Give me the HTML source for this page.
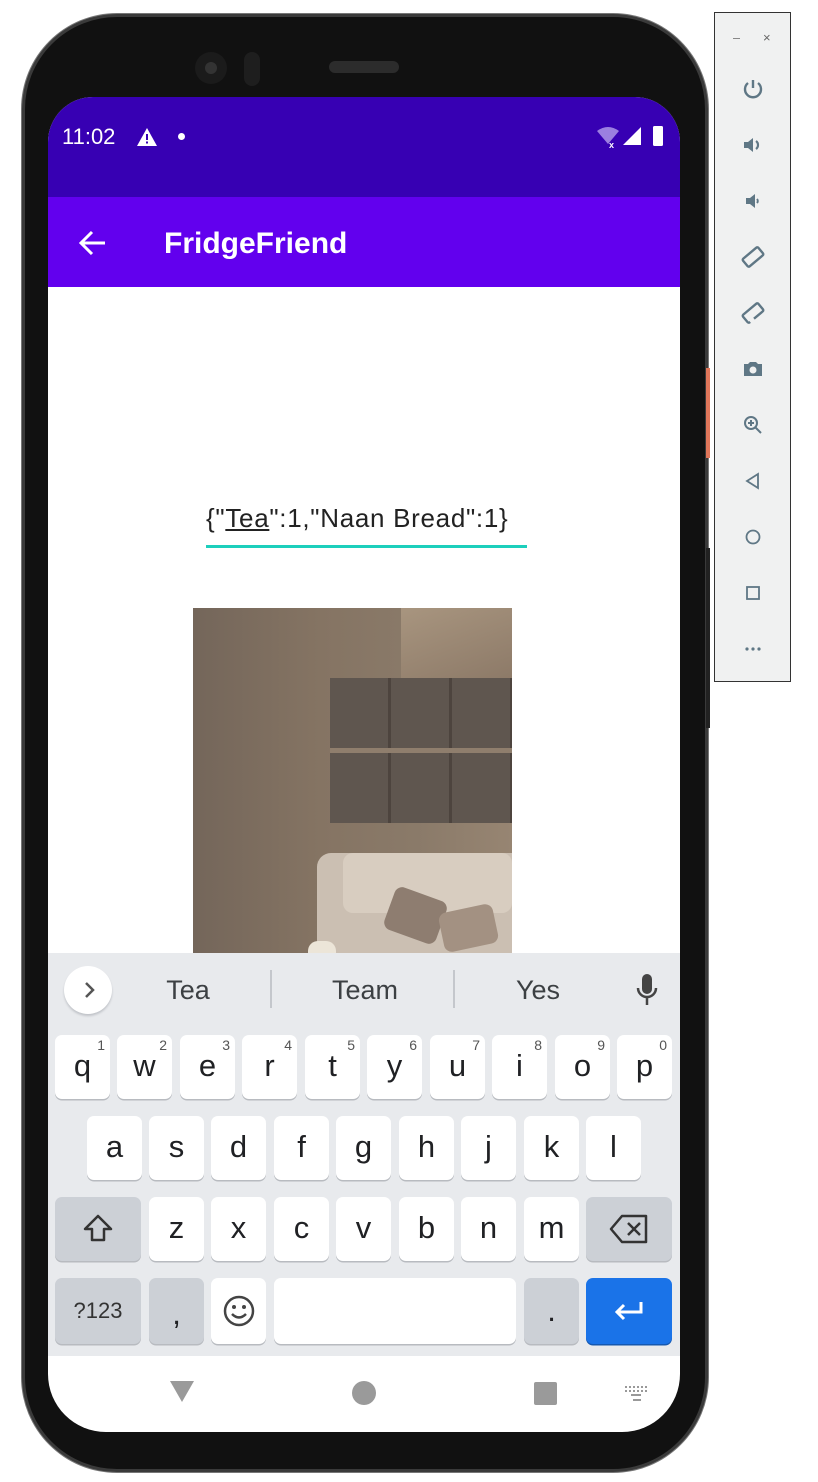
<!DOCTYPE html>
<html><head><meta charset="utf-8"><style>
*{margin:0;padding:0;box-sizing:border-box}
body{width:818px;height:1482px;background:#fff;position:relative;overflow:hidden;font-family:"Liberation Sans",sans-serif}
.abs{position:absolute}
.phone{left:22px;top:14px;width:686px;height:1458px;background:#111;border-radius:95px;border:3px solid #3a3a3a;box-shadow:0 0 0 1px #777}
.screen{left:48px;top:97px;width:632px;height:1335px;background:#fff;border-radius:45px 45px 58px 58px;overflow:hidden}
.key{position:absolute;background:#fff;border-radius:7px;box-shadow:0 1.5px 0 #b8bbc0;text-align:center;font-size:31px;color:#202124;height:64px;line-height:62px}
.key sup{position:absolute;top:3px;right:5px;font-size:14px;line-height:14px;color:#555}
.gray{background:#ccd0d6}
.side{left:714px;top:12px;width:77px;height:670px;background:#f0f1f1;border:1px solid #333}
.ic{position:absolute;left:26px;width:24px;height:24px}
</style></head><body>
<div class="abs phone"></div>
<div class="abs" style="left:706px;top:368px;width:4px;height:90px;background:#e0765a"></div>
<div class="abs" style="left:706px;top:548px;width:4px;height:180px;background:#222"></div>
<div class="abs" style="left:195px;top:52px;width:32px;height:32px;border-radius:50%;background:#1b1b1b"></div>
<div class="abs" style="left:205px;top:62px;width:12px;height:12px;border-radius:50%;background:#333"></div>
<div class="abs" style="left:244px;top:52px;width:16px;height:34px;border-radius:8px;background:#1e1e1e"></div>
<div class="abs" style="left:329px;top:61px;width:70px;height:12px;border-radius:6px;background:#2c2c2c"></div>
<div class="abs screen">
 <div class="abs" style="left:0;top:0;width:632px;height:100px;background:#3700b3"></div>
 <div class="abs" style="left:14px;top:27px;color:#fff;font-size:22px">11:02</div>
 <svg class="abs" style="left:88px;top:30px" width="22" height="20" viewBox="0 0 22 20"><path d="M11 1L21 19H1Z" fill="#fff"/><rect x="10" y="7" width="2" height="6" fill="#3700b3"/><rect x="10" y="14.5" width="2" height="2" fill="#3700b3"/></svg>
 <div class="abs" style="left:130px;top:36px;width:7px;height:7px;border-radius:50%;background:#fff"></div>
 <svg class="abs" style="left:548px;top:28px" width="72" height="24" viewBox="0 0 72 24"><path d="M1 6Q12-2 23 6L12 19Z" fill="#9b7fe0"/><text x="13" y="23" font-size="9" fill="#fff" font-family="Liberation Sans" font-weight="bold">x</text><path d="M45 2V20H27Z" fill="#fff"/><rect x="57" y="1" width="10" height="20" rx="1.5" fill="#fff"/></svg>
 <div class="abs" style="left:0;top:100px;width:632px;height:90px;background:#6200ee"></div>
 <svg class="abs" style="left:30px;top:132px" width="30" height="28" viewBox="0 0 30 28"><path d="M27 14H4M14 3L3 14L14 25" stroke="#fff" stroke-width="3" fill="none"/></svg>
 <div class="abs" style="left:116px;top:130px;color:#fff;font-size:30px;font-weight:bold">FridgeFriend</div>
 <div class="abs" style="left:158px;top:406px;text-align:left;font-size:26px;letter-spacing:0.7px;color:#222;white-space:nowrap">{"<u>Tea</u>":1,"Naan Bread":1}</div>
 <div class="abs" style="left:158px;top:448px;width:321px;height:3px;background:#1dcfbc"></div>
 <div class="abs" style="left:145px;top:511px;width:319px;height:345px;background:linear-gradient(90deg,#74665a,#85746 40%,#8a7a69 70%,#978572);background:linear-gradient(90deg,#74665a,#857463 40%,#8a7a69 70%,#978572);overflow:hidden">
  <div class="abs" style="left:208px;top:0;width:111px;height:70px;background:linear-gradient(160deg,#a8957f,#8d7a68)"></div>
  <div class="abs" style="left:137px;top:70px;width:182px;height:145px;background:repeating-linear-gradient(90deg,#5f564f 0 58px,#4d443e 58px 61px)"></div>
  <div class="abs" style="left:137px;top:140px;width:182px;height:5px;background:#8f7e6d"></div>
  <div class="abs" style="left:124px;top:245px;width:195px;height:100px;background:#cbbfb2;border-radius:14px 0 0 0"></div>
  <div class="abs" style="left:150px;top:245px;width:169px;height:60px;background:#d8cdc0;border-radius:10px"></div>
  <div class="abs" style="left:195px;top:285px;width:55px;height:45px;background:#8e7d70;border-radius:8px;transform:rotate(20deg)"></div>
  <div class="abs" style="left:248px;top:300px;width:55px;height:40px;background:#a39182;border-radius:8px;transform:rotate(-12deg)"></div>
  <div class="abs" style="left:115px;top:333px;width:28px;height:20px;background:#ece5d8;border-radius:10px 10px 0 0"></div>
 </div>
 <div class="abs" style="left:0;top:856px;width:632px;height:403px;background:#e8eaed"></div>
 <div class="abs" style="left:16px;top:869px;width:48px;height:48px;border-radius:50%;background:#fff;box-shadow:0 2px 2px #c0c3c8"></div>
 <svg class="abs" style="left:31px;top:882px" width="20" height="22" viewBox="0 0 20 22"><path d="M7 4L14 11L7 18" stroke="#555" stroke-width="2.5" fill="none"/></svg>
 <div class="abs" style="left:90px;top:878px;width:100px;text-align:center;font-size:27px;color:#3c4043">Tea</div>
 <div class="abs" style="left:222px;top:873px;width:1.5px;height:38px;background:#c4c7cc"></div>
 <div class="abs" style="left:262px;top:878px;width:110px;text-align:center;font-size:27px;color:#3c4043">Team</div>
 <div class="abs" style="left:405px;top:873px;width:1.5px;height:38px;background:#c4c7cc"></div>
 <div class="abs" style="left:440px;top:878px;width:100px;text-align:center;font-size:27px;color:#3c4043">Yes</div>
 <svg class="abs" style="left:587px;top:876px" width="24" height="34" viewBox="0 0 24 34"><rect x="7" y="1" width="10" height="20" rx="5" fill="#444"/><path d="M3 15a9 9 0 0 0 18 0M12 24v8" stroke="#444" stroke-width="2.5" fill="none"/></svg>
 <div class="key" style="left:7px;top:938px;width:55px">q<sup>1</sup></div>
 <div class="key" style="left:69px;top:938px;width:55px">w<sup>2</sup></div>
 <div class="key" style="left:132px;top:938px;width:55px">e<sup>3</sup></div>
 <div class="key" style="left:194px;top:938px;width:55px">r<sup>4</sup></div>
 <div class="key" style="left:257px;top:938px;width:55px">t<sup>5</sup></div>
 <div class="key" style="left:319px;top:938px;width:55px">y<sup>6</sup></div>
 <div class="key" style="left:382px;top:938px;width:55px">u<sup>7</sup></div>
 <div class="key" style="left:444px;top:938px;width:55px">i<sup>8</sup></div>
 <div class="key" style="left:507px;top:938px;width:55px">o<sup>9</sup></div>
 <div class="key" style="left:569px;top:938px;width:55px">p<sup>0</sup></div>
 <div class="key" style="left:39px;top:1019px;width:55px">a</div>
 <div class="key" style="left:101px;top:1019px;width:55px">s</div>
 <div class="key" style="left:163px;top:1019px;width:55px">d</div>
 <div class="key" style="left:226px;top:1019px;width:55px">f</div>
 <div class="key" style="left:288px;top:1019px;width:55px">g</div>
 <div class="key" style="left:351px;top:1019px;width:55px">h</div>
 <div class="key" style="left:413px;top:1019px;width:55px">j</div>
 <div class="key" style="left:476px;top:1019px;width:55px">k</div>
 <div class="key" style="left:538px;top:1019px;width:55px">l</div>
 <div class="key gray" style="left:7px;top:1100px;width:86px"><svg width="34" height="34" viewBox="0 0 34 34" style="margin-top:15px"><path d="M17 4L4 17h7v11h12V17h7Z" stroke="#333" stroke-width="2.5" fill="none" stroke-linejoin="round"/></svg></div>
 <div class="key" style="left:101px;top:1100px;width:55px">z</div>
 <div class="key" style="left:163px;top:1100px;width:55px">x</div>
 <div class="key" style="left:226px;top:1100px;width:55px">c</div>
 <div class="key" style="left:288px;top:1100px;width:55px">v</div>
 <div class="key" style="left:351px;top:1100px;width:55px">b</div>
 <div class="key" style="left:413px;top:1100px;width:55px">n</div>
 <div class="key" style="left:476px;top:1100px;width:55px">m</div>
 <div class="key gray" style="left:538px;top:1100px;width:86px"><svg width="42" height="34" viewBox="0 0 42 34" style="margin-top:15px"><path d="M14 4H38V30H14L3 17Z" stroke="#333" stroke-width="2.5" fill="none" stroke-linejoin="round"/><path d="M20 11l12 12M32 11L20 23" stroke="#333" stroke-width="2.5"/></svg></div>
 <div class="key gray" style="left:7px;top:1181px;width:86px;height:66px;font-size:22px;line-height:66px;color:#333">?123</div>
 <div class="key gray" style="left:101px;top:1181px;width:55px;height:66px;line-height:72px">,</div>
 <div class="key" style="left:163px;top:1181px;width:55px;height:66px"><svg width="34" height="34" viewBox="0 0 34 34" style="margin-top:16px"><circle cx="17" cy="17" r="14" stroke="#444" stroke-width="2.5" fill="none"/><circle cx="12" cy="13" r="2" fill="#444"/><circle cx="22" cy="13" r="2" fill="#444"/><path d="M10 20q7 7 14 0" stroke="#444" stroke-width="2.5" fill="none"/></svg></div>
 <div class="key" style="left:226px;top:1181px;width:242px;height:66px"></div>
 <div class="key gray" style="left:476px;top:1181px;width:55px;height:66px;line-height:66px">.</div>
 <div class="key" style="left:538px;top:1181px;width:86px;height:66px;background:#1a73e8;box-shadow:0 1.5px 0 #1558b0"><svg width="40" height="30" viewBox="0 0 40 30" style="margin-top:18px"><path d="M32 6v10H8M15 9l-7 7 7 7" stroke="#fff" stroke-width="3" fill="none"/></svg></div>
 <svg class="abs" style="left:120px;top:1280px" width="28" height="28" viewBox="0 0 28 28"><path d="M2 4H26L14 25Z" fill="#9a9a9a"/></svg>
 <div class="abs" style="left:304px;top:1284px;width:24px;height:24px;border-radius:50%;background:#9a9a9a"></div>
 <div class="abs" style="left:486px;top:1285px;width:23px;height:23px;border-radius:2px;background:#9a9a9a"></div>
 <svg class="abs" style="left:576px;top:1288px" width="26" height="18" viewBox="0 0 26 18"><g fill="#999"><rect x="1" y="1" width="2" height="2"/><rect x="5" y="1" width="2" height="2"/><rect x="9" y="1" width="2" height="2"/><rect x="13" y="1" width="2" height="2"/><rect x="17" y="1" width="2" height="2"/><rect x="21" y="1" width="2" height="2"/><rect x="1" y="5" width="2" height="2"/><rect x="5" y="5" width="2" height="2"/><rect x="9" y="5" width="2" height="2"/><rect x="13" y="5" width="2" height="2"/><rect x="17" y="5" width="2" height="2"/><rect x="21" y="5" width="2" height="2"/><rect x="7" y="9" width="10" height="2"/><rect x="9" y="14" width="8" height="2"/></g></svg>
</div>
<div class="abs side">
 <div class="abs" style="left:18px;top:25px;width:7px;height:1px;background:#888"></div>
 <div class="abs" style="left:48px;top:17px;font-size:13px;color:#666">×</div>
 <svg class="ic" style="top:64px" viewBox="0 0 24 24"><path d="M12 3v8M7 6a8 8 0 1 0 10 0" stroke="#5f7785" stroke-width="2.4" fill="none"/></svg>
 <svg class="ic" style="top:120px" viewBox="0 0 24 24"><path d="M3 9h4l5-4v14l-5-4H3z" fill="#5f7785"/><path d="M15 8a5 5 0 0 1 0 8" stroke="#5f7785" stroke-width="2.2" fill="none"/></svg>
 <svg class="ic" style="top:176px" viewBox="0 0 24 24"><path d="M5 9h4l5-4v14l-5-4H5z" fill="#5f7785"/><path d="M16 10a3 3 0 0 1 0 4" stroke="#5f7785" stroke-width="2" fill="none"/></svg>
 <svg class="ic" style="top:232px" viewBox="0 0 24 24"><rect x="2" y="7" width="20" height="10" rx="1.5" transform="rotate(-40 12 12)" stroke="#5f7785" stroke-width="2.4" fill="none"/></svg>
 <svg class="ic" style="top:288px" viewBox="0 0 24 24"><rect x="2" y="7" width="20" height="10" rx="1.5" transform="rotate(-40 12 12)" stroke="#5f7785" stroke-width="2.4" fill="none" stroke-dasharray="40 5"/></svg>
 <svg class="ic" style="top:344px" viewBox="0 0 24 24"><path d="M3 7h4l2-2h6l2 2h4v12H3z" fill="#5f7785"/><circle cx="12" cy="13" r="3.5" fill="#f0f1f1"/></svg>
 <svg class="ic" style="top:400px" viewBox="0 0 24 24"><circle cx="10" cy="10" r="6" stroke="#5f7785" stroke-width="2" fill="none"/><path d="M14.5 14.5L20 20M10 7v6M7 10h6" stroke="#5f7785" stroke-width="2"/></svg>
 <svg class="ic" style="top:456px" viewBox="0 0 24 24"><path d="M17 5v14L6 12z" stroke="#5f7785" stroke-width="1.8" fill="none"/></svg>
 <svg class="ic" style="top:512px" viewBox="0 0 24 24"><circle cx="12" cy="12" r="6.5" stroke="#5f7785" stroke-width="1.8" fill="none"/></svg>
 <svg class="ic" style="top:568px" viewBox="0 0 24 24"><rect x="6" y="6" width="12" height="12" stroke="#5f7785" stroke-width="1.8" fill="none"/></svg>
 <svg class="ic" style="top:624px" viewBox="0 0 24 24"><g fill="#5f7785"><circle cx="6" cy="12" r="1.6"/><circle cx="12" cy="12" r="1.6"/><circle cx="18" cy="12" r="1.6"/></g></svg>
</div>
</body></html>
